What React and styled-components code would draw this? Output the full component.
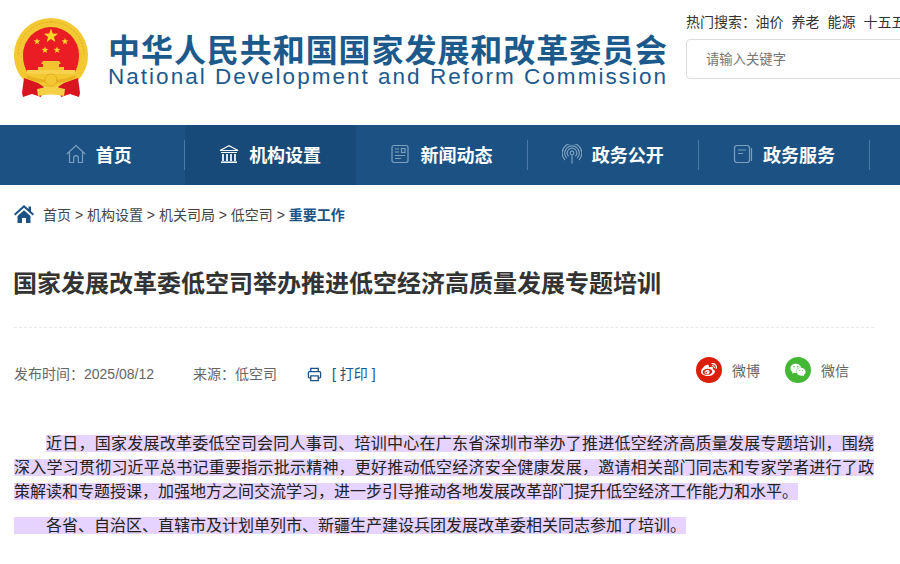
import styled, { createGlobalStyle } from "styled-components";
import { FaWeibo, FaWeixin } from "react-icons/fa";

const GlobalStyle = createGlobalStyle`
  html, body {
    margin: 0;
    padding: 0;
    width: 900px;
    height: 564px;
    overflow: hidden;
    background: #fff;
    font-family: "Liberation Sans", "Noto Sans CJK SC", sans-serif;
  }
`;

const Page = styled.div`
  width: 900px;
  height: 564px;
  overflow: hidden;
`;

const Header = styled.header`
  height: 125px;
  display: flex;
  align-items: flex-start;
  padding-left: 13px;
  white-space: nowrap;
`;

const Emblem = styled.svg`
  width: 76px;
  height: 82px;
  margin-top: 17px;
  flex: none;
`;

const Brand = styled.div`
  margin-left: 19px;
  margin-top: 35px;
  width: 560px;
  flex: none;
  color: #1c5a8c;
`;

const BrandCn = styled.div`
  font-size: 32px;
  line-height: 32px;
  font-weight: 700;
  letter-spacing: 0.94px;
`;

const BrandEn = styled.div`
  font-size: 22.5px;
  line-height: 20px;
  letter-spacing: 2.02px;
`;

const SearchCol = styled.div`
  margin-left: 18px;
  margin-top: 13px;
  flex: none;
`;

const HotWords = styled.div`
  display: flex;
  font-size: 14px;
  line-height: 18px;
  color: #333;
  margin-bottom: 8px;
`;

const HotLabel = styled.span`
  width: 69.5px;
`;

const HotWord = styled.span`
  margin-right: 8px;
`;

const SearchInput = styled.input`
  display: block;
  box-sizing: border-box;
  width: 300px;
  height: 40px;
  border: 1px solid #ddd;
  border-radius: 4px;
  padding: 0 19px;
  font-size: 13.33px;
  font-family: inherit;
  outline: none;
  &::placeholder {
    color: #757575;
  }
`;

const Nav = styled.nav`
  height: 60px;
  background: #1c5283;
  display: flex;
  padding-left: 13.7px;
`;

const NavItem = styled.a`
  position: relative;
  box-sizing: border-box;
  width: 171.3px;
  flex: none;
  display: flex;
  align-items: center;
  justify-content: center;
  gap: 10px;
  padding: 0 1px 2px 0;
  color: #fff;
  font-size: 18px;
  font-weight: 700;
  background: ${(p) => (p.$active ? "#184a79" : "transparent")};
  &::after {
    content: "";
    display: ${(p) => (p.$active ? "none" : "block")};
    position: absolute;
    right: 0;
    top: 15px;
    height: 30px;
    width: 1px;
    background: #4a7aa5;
  }
`;

const NavIcon = styled.svg`
  width: 20px;
  height: 20px;
  fill: none;
  stroke: ${(p) => (p.$active ? "#fff" : "#7d9fbe")};
  stroke-width: 1.2;
`;

const Content = styled.main`
  width: 860px;
  margin-left: 14px;
`;

const Crumbs = styled.div`
  display: flex;
  align-items: center;
  height: 20px;
  margin-top: 19px;
  font-size: 14px;
  color: #444;
`;

const CrumbHome = styled.svg`
  width: 20px;
  height: 18px;
  margin-right: 9px;
  fill: #1c5283;
`;

const CrumbCurrent = styled.span`
  color: #1c5283;
  font-weight: 700;
`;

const Title = styled.h1`
  margin: 40px 0 0 -1px;
  font-size: 24px;
  line-height: 40px;
  font-weight: 700;
  color: #333;
`;

const Rule = styled.div`
  margin-top: 23px;
  border-top: 1px dashed #e8e8e8;
`;

const Meta = styled.div`
  display: flex;
  align-items: center;
  height: 30px;
  margin-top: 30px;
  font-size: 14px;
  color: #666;
`;

const MetaItem = styled.span`
  margin-right: 39px;
`;

const PrintLink = styled.span`
  display: flex;
  align-items: center;
  color: #1c5283;
  font-size: 14px;
  margin-left: -9px;
  gap: 10px;
`;

const PrintIcon = styled.svg`
  width: 15px;
  height: 15px;
  margin-top: 3px;
  fill: none;
  stroke: #1c5283;
  stroke-width: 1.4;
`;

const Share = styled.div`
  display: flex;
  align-items: center;
  margin-left: auto;
  margin-right: 25px;
  margin-top: -6px;
`;

const ShareLink = styled.span`
  display: flex;
  align-items: center;
  gap: 10px;
  margin-left: 25px;
  font-size: 14px;
  color: #666;
`;

const ShareDot = styled.span`
  width: 26px;
  height: 26px;
  border-radius: 50%;
  background: ${(p) => p.$color};
  color: #fff;
  display: flex;
  align-items: center;
  justify-content: center;
  font-size: 16px;
`;

const Article = styled.article`
  margin-top: 44px;
  font-size: 16px;
  line-height: 24px;
  color: #222;
`;

const Para = styled.p`
  margin: 0 0 10px;
  text-align: justify;
  text-indent: ${(p) => (p.$indent ? "2em" : "0")};
`;

const Mark = styled.span`
  background: #e6d3ff;
`;

const starPoints = (cx, cy, r) => {
  const pts = [];
  for (let i = 0; i < 10; i++) {
    const rad = i % 2 ? r * 0.4 : r;
    const a = -Math.PI / 2 + (i * Math.PI) / 5;
    pts.push(`${(cx + rad * Math.cos(a)).toFixed(2)},${(cy + rad * Math.sin(a)).toFixed(2)}`);
  }
  return pts.join(" ");
};

function EmblemLogo() {
  return (
    <Emblem viewBox="13 17 76 82">
      {/* wreath */}
      <path d="M51 18a37 37 0 0 1 37 37c0 12 -5 21 -12 27l-25 7 -25 -7c-7 -6 -12 -15 -12 -27a37 37 0 0 1 37 -37z" fill="#f3c933" />
      <path d="M51 22a33 33 0 0 1 33 33M51 22a33 33 0 0 0 -33 33" fill="none" stroke="#e0a91f" strokeWidth="1" strokeDasharray="2 1.500" />
      {/* red disc */}
      <path d="M51 27a28 28 0 0 1 28 28c0 7 -1.500 12 -4 17H27c-2.500 -5 -4 -10 -4 -17a28 28 0 0 1 28 -28z" fill="#ea1c24" />
      <polygon points={starPoints(51, 36, 7.500)} fill="#fbd52a" />
      <polygon points={starPoints(37, 41.500, 3.600)} fill="#fbd52a" />
      <polygon points={starPoints(65, 41.500, 3.600)} fill="#fbd52a" />
      <polygon points={starPoints(45, 50, 3.600)} fill="#fbd52a" />
      <polygon points={starPoints(57, 50, 3.600)} fill="#fbd52a" />
      {/* gate */}
      <path d="M43 61h16l2 3h-2v3H43v-3h-2z" fill="#f4c430" />
      <rect x="38" y="67" width="26" height="3" fill="#f4c430" />
      <rect x="27" y="70" width="48" height="4" fill="#f8d24c" />
      {/* red ribbons in front of the wreath */}
      <path d="M24 78l14 5 6 4 -3 10 -9 -3 -9 3 -1 -4z" fill="#d9161f" />
      <path d="M78 78l-14 5 -6 4 3 10 9 -3 9 3 1 -4z" fill="#d9161f" />
      <path d="M26 75q25 10 50 0l-2 4q-23 8 -46 0z" fill="#e9b022" />
      {/* cog and lower knot */}
      <circle cx="51" cy="80" r="6" fill="#f3c933" stroke="#d49a1a" strokeWidth="1" strokeDasharray="1.500 1" />
      <path d="M37 89q14 -4 28 0l-1 7q-13 -3 -26 0z" fill="#f5cf45" />
    </Emblem>
  );
}

function App() {
  return (
    <Page>
      <GlobalStyle />
      <Header>
        <EmblemLogo />
        <Brand>
          <BrandCn>中华人民共和国国家发展和改革委员会</BrandCn>
          <BrandEn>National Development and Reform Commission</BrandEn>
        </Brand>
        <SearchCol>
          <HotWords>
            <HotLabel>热门搜索：</HotLabel>
            <HotWord>油价</HotWord>
            <HotWord>养老</HotWord>
            <HotWord>能源</HotWord>
            <HotWord>十五五</HotWord>
          </HotWords>
          <SearchInput placeholder="请输入关键字" />
        </SearchCol>
      </Header>

      <Nav>
        <NavItem>
          <NavIcon viewBox="0 0 20 20">
            <path d="M.8 10L10 1.500 19.200 10M3.500 8v10.500h4.200v-4.500a2.300 2.300 0 0 1 4.600 0v4.500h4.200V8" />
          </NavIcon>
          首页
        </NavItem>
        <NavItem $active>
          <NavIcon viewBox="0 0 20 20" $active>
            <path d="M1 6.500L10 1.800l9 4.700zM2 8.500h16" />
            <path d="M4 10v7M8 10v7M12 10v7M16 10v7" strokeWidth="1.700" />
            <path d="M2 18.200h16" strokeWidth="1.500" />
          </NavIcon>
          机构设置
        </NavItem>
        <NavItem>
          <NavIcon viewBox="0 0 20 20">
            <rect x="2" y="1.500" width="16" height="17" rx="2" />
            <path d="M5 5h4M5 8h4M5 11.500h10M5 14.500h6M11.500 4.500h3.500v4h-3.500z" />
          </NavIcon>
          新闻动态
        </NavItem>
        <NavItem>
          <NavIcon viewBox="0 0 20 20">
            <circle cx="10" cy="9" r="1.800" />
            <path d="M10 10.800V19.500M6.600 12.400a4.800 4.800 0 1 1 6.800 0M4.800 14.200a7.300 7.300 0 1 1 10.400 0M3 16a9.800 9.800 0 1 1 14 0" />
          </NavIcon>
          政务公开
        </NavItem>
        <NavItem>
          <NavIcon viewBox="0 0 20 20">
            <rect x="1.500" y="1.500" width="15" height="17" rx="2.500" />
            <path d="M5 6h8M5 9.500h5M18.500 4v13" />
          </NavIcon>
          政务服务
        </NavItem>
      </Nav>

      <Content>
        <Crumbs>
          <CrumbHome viewBox="0 0 20 18">
            <path d="M10 0L0 9l1.300 1.400L10 2.700l8.700 7.700L20 9l-3-2.700V1.500h-2.500v2.600zM3.500 11v7h4.500v-5h4v5h4.500v-7L10 5.200z" />
          </CrumbHome>
          <span>首页 &gt; 机构设置 &gt; 机关司局 &gt; 低空司 &gt;&nbsp;</span>
          <CrumbCurrent>重要工作</CrumbCurrent>
        </Crumbs>

        <Title>国家发展改革委低空司举办推进低空经济高质量发展专题培训</Title>
        <Rule />

        <Meta>
          <MetaItem>发布时间：2025/08/12</MetaItem>
          <MetaItem>来源：低空司</MetaItem>
          <PrintLink>
            <PrintIcon viewBox="0 0 16 16">
              <path d="M4 5V1.500h8V5M4 11.500H2.500a1 1 0 0 1 -1 -1V6a1 1 0 0 1 1 -1h11a1 1 0 0 1 1 1v4.500a1 1 0 0 1 -1 1H12M4 9.500h8v5H4z" />
            </PrintIcon>
            [ 打印 ]
          </PrintLink>
          <Share>
            <ShareLink>
              <ShareDot $color="#dc1f0b"><FaWeibo /></ShareDot>
              微博
            </ShareLink>
            <ShareLink>
              <ShareDot $color="#44b835"><FaWeixin /></ShareDot>
              微信
            </ShareLink>
          </Share>
        </Meta>

        <Article>
          <Para $indent>
            <Mark>
              近日，国家发展改革委低空司会同人事司、培训中心在广东省深圳市举办了推进低空经济高质量发展专题培训，围绕深入学习贯彻习近平总书记重要指示批示精神，更好推动低空经济安全健康发展，邀请相关部门同志和专家学者进行了政策解读和专题授课，加强地方之间交流学习，进一步引导推动各地发展改革部门提升低空经济工作能力和水平。
            </Mark>
          </Para>
          <Para>
            <Mark>　　各省、自治区、直辖市及计划单列市、新疆生产建设兵团发展改革委相关同志参加了培训。</Mark>
          </Para>
        </Article>
      </Content>
    </Page>
  );
}

export default App;
